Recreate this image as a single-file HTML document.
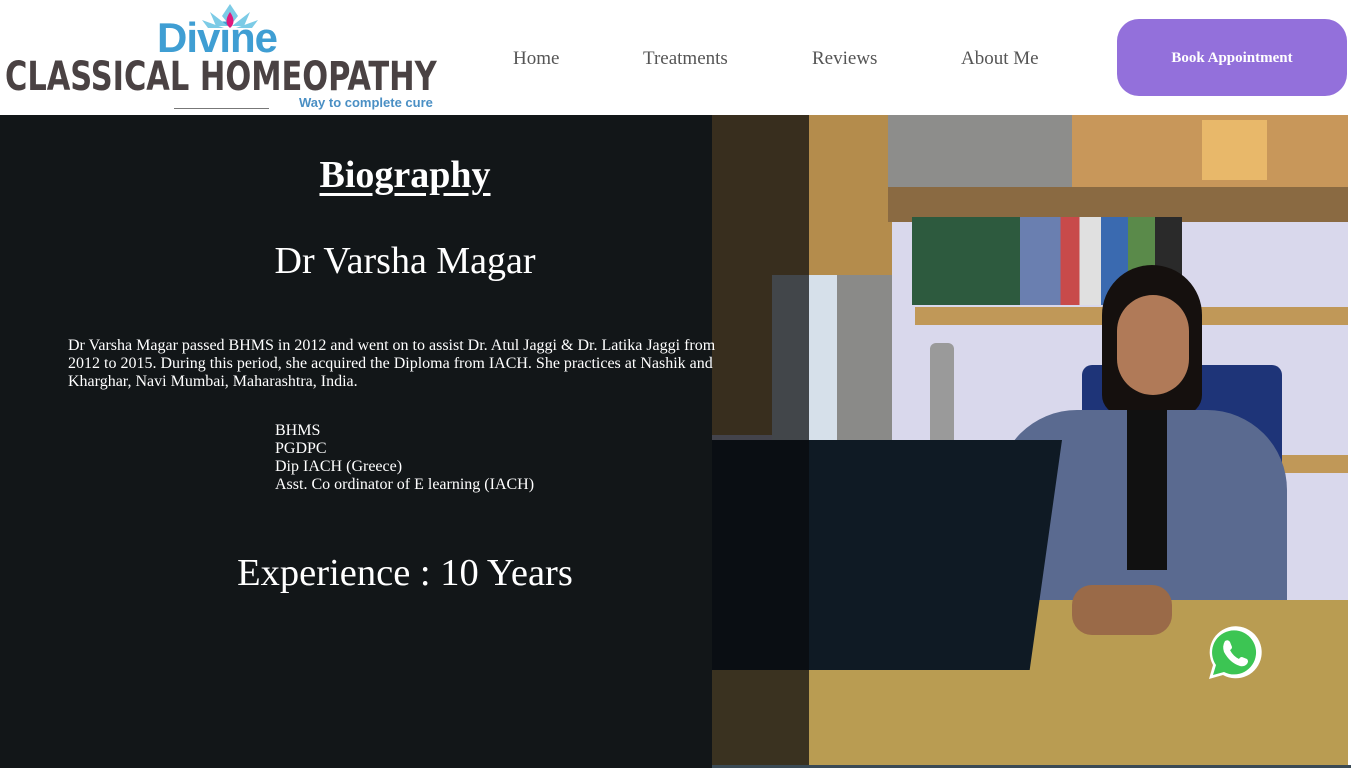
<!DOCTYPE html>
<html><head><meta charset="utf-8"><style>
*{margin:0;padding:0;box-sizing:border-box}
body{width:1351px;height:768px;overflow:hidden;background:#fff;font-family:"Liberation Serif",serif;position:relative}
.a{position:absolute}
nav a{position:absolute;top:48px;font-size:19px;color:#555;text-decoration:none}
</style></head><body>
<div class="a" style="left:0;top:0;width:1351px;height:115px;background:#fff"></div>
<div class="a" style="left:157px;top:14px;font:bold 42px 'Liberation Sans',sans-serif;color:#3f9ed3;letter-spacing:-1px">Divine</div>
<svg class="a" style="left:200px;top:2px" width="60" height="28" viewBox="0 0 60 28">
<path d="M30 2 L38 14 L30 24 L22 14Z" fill="#7ccbe6"/>
<path d="M10 10 L28 24 L16 24Z M50 10 L32 24 L44 24Z" fill="#7ccbe6"/>
<path d="M2 18 L24 26 L8 26Z M58 18 L36 26 L52 26Z" fill="#7ccbe6"/>
<path d="M30 10 Q37 20 30 26 Q23 20 30 10Z" fill="#e0197d"/>
</svg>
<div class="a" style="left:5px;top:54px;font:bold 40px 'DejaVu Sans Condensed','Liberation Sans Narrow',sans-serif;color:#4a4243;transform:scaleX(0.846);transform-origin:left;white-space:nowrap">CLASSICAL HOMEOPATHY</div>
<div class="a" style="left:174px;top:108px;width:95px;height:1px;background:#777"></div>
<div class="a" style="left:299px;top:95px;font:bold 13px 'Liberation Sans',sans-serif;color:#4a8fc4">Way to complete cure</div>
<nav>
<a style="left:513px">Home</a><a style="left:643px">Treatments</a><a style="left:812px">Reviews</a><a style="left:961px">About Me</a>
</nav>
<div class="a" style="left:1117px;top:19px;width:230px;height:77px;background:#9370db;border-radius:22px;color:#fff;font:bold 15px 'Liberation Serif',serif;display:flex;align-items:center;justify-content:center;padding-top:2px">Book Appointment</div>
<div class="a" style="left:0;top:115px;width:712px;height:653px;background:#121618"></div>
<div class="a" style="left:712px;top:115px;width:636px;height:650px;background:#d9d8ec;overflow:hidden">
 <div class="a" style="left:0;top:0;width:180px;height:320px;background:#b48c4c"></div>
 <div class="a" style="left:60px;top:160px;width:65px;height:330px;background:#d6e0ea"></div>
 <div class="a" style="left:125px;top:160px;width:55px;height:330px;background:#8a8a88"></div>
 <div class="a" style="left:176px;top:0;width:184px;height:78px;background:#8d8d8b"></div>
 <div class="a" style="left:360px;top:0;width:276px;height:72px;background:#c8975a"></div>
 <div class="a" style="left:176px;top:72px;width:460px;height:35px;background:#8a6a42"></div>
 <div class="a" style="left:490px;top:5px;width:65px;height:60px;background:#e8b86a"></div>
 <div class="a" style="left:200px;top:102px;width:270px;height:88px;background:linear-gradient(90deg,#2d5a3e 0 40%,#6a7fb0 40% 55%,#c84a4a 55% 62%,#e0e0e0 62% 70%,#3a6ab0 70% 80%,#5a8a4a 80% 90%,#2a2a2a 90%)"></div>
 <div class="a" style="left:203px;top:192px;width:433px;height:18px;background:#c09858"></div>
 <div class="a" style="left:203px;top:340px;width:433px;height:18px;background:#c09858"></div>
 <div class="a" style="left:218px;top:228px;width:24px;height:110px;background:#9a9a9a;border-radius:6px"></div>
 <div class="a" style="left:370px;top:250px;width:200px;height:250px;background:#1e3478;border-radius:10px"></div>
 <div class="a" style="left:390px;top:150px;width:100px;height:150px;background:#15100e;border-radius:50px 50px 20px 20px"></div>
 <div class="a" style="left:405px;top:180px;width:72px;height:100px;background:#b07a58;border-radius:36px"></div>
 <div class="a" style="left:285px;top:295px;width:290px;height:230px;background:#5a6a90;border-radius:80px 80px 10px 10px"></div>
 <div class="a" style="left:415px;top:295px;width:40px;height:160px;background:#111"></div>
 <div class="a" style="left:0;top:485px;width:636px;height:165px;background:#b99c52"></div>
 <div class="a" style="left:360px;top:470px;width:100px;height:50px;background:#9a6a48;border-radius:20px"></div>
 <div class="a" style="left:0;top:325px;width:350px;height:230px;background:#0f1a24;transform:skewX(-8deg);transform-origin:top left"></div>
 <div class="a" style="left:0;top:0;width:97px;height:650px;background:rgba(8,10,12,.72)"></div>
</div>
<div class="a" style="left:712px;top:765px;width:639px;height:3px;background:#3a4a55"></div>
<svg class="a" style="left:1205px;top:624px" width="58" height="58" viewBox="0 0 58 58">
<path d="M4 55 L8 41 A26 26 0 1 1 18 51 Z" fill="#fff"/>
<path d="M8 51 L11 41 A22 22 0 1 1 19 48 Z" fill="#3cc553"/>
<path d="M20 17 q3-2 5 1 l2 5 q0 2-2 3 q3 6 9 9 q1-2 3-2 l5 2 q2 2 0 5 q-3 3-7 2 q-10-3-16-14 q-2-6 1-11z" fill="#fff"/>
</svg>
<div class="a" style="left:0;top:153px;width:810px;text-align:center;color:#fff;font-size:38px;font-weight:bold"><span style="text-decoration:underline;text-underline-offset:6px">Biography</span></div>
<div class="a" style="left:0;top:239px;width:810px;text-align:center;color:#fff;font-size:38px">Dr Varsha Magar</div>
<div class="a" style="left:68px;top:337px;width:665px;color:#fff;font-size:16px;line-height:18px">Dr Varsha Magar passed BHMS in 2012 and went on to assist Dr. Atul Jaggi &amp; Dr. Latika Jaggi from 2012 to 2015. During this period, she acquired the Diploma from IACH. She practices at Nashik and Kharghar, Navi Mumbai, Maharashtra, India.</div>
<div class="a" style="left:275px;top:422px;color:#fff;font-size:16px;line-height:18px">BHMS<br>PGDPC<br>Dip IACH (Greece)<br>Asst. Co ordinator of E learning (IACH)</div>
<div class="a" style="left:0;top:551px;width:810px;text-align:center;color:#fff;font-size:38.5px">Experience : 10 Years</div>
</body></html>
